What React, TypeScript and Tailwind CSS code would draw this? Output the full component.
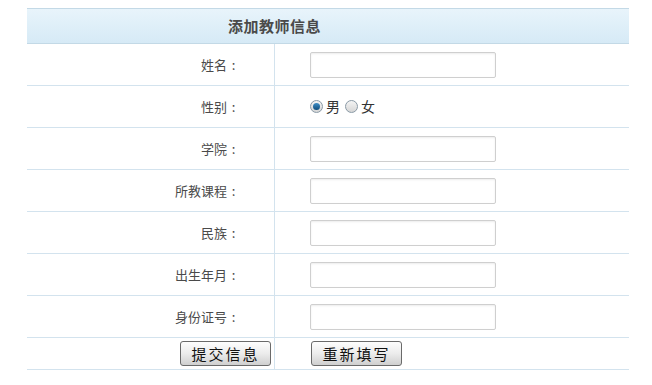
import React from "react";

const font = { fontFamily: '"Noto Sans CJK SC", "Noto Sans", sans-serif' };

function Row({ label, children }: { label: string; children: React.ReactNode }) {
  return (
    <div className="flex h-[42px] border-b border-[#d3e3ee]">
      <div className="w-[248px] shrink-0 border-r border-[#d3e3ee] flex items-center justify-end pr-[34px] text-[13px] text-[#4a4a4a]">
        <span>{label}</span>
        <span className="inline-block w-[13px] text-center">:</span>
      </div>
      <div className="flex-1 flex items-center pl-[35px]">{children}</div>
    </div>
  );
}

function Input() {
  return (
    <input
      type="text"
      className="w-[186px] h-[26px] border border-[#cfcfcf] rounded-[2px] bg-white shadow-[inset_0_1px_2px_rgba(0,0,0,0.08)] outline-none"
    />
  );
}

function Radio({ checked }: { checked?: boolean }) {
  return (
    <span className="inline-flex w-[13px] h-[13px] rounded-full border border-[#8a9aa6] bg-gradient-to-b from-[#f4f4f4] to-[#d6d6d6] items-center justify-center">
      {checked && <span className="w-[7px] h-[7px] rounded-full bg-gradient-to-b from-[#3f8fc7] to-[#0d4d7c]" />}
    </span>
  );
}

function Btn({ text }: { text: string }) {
  return (
    <button className="w-[91px] h-[25px] border border-[#6a6a6a] rounded-[3px] bg-gradient-to-b from-[#fdfdfd] via-[#ececec] to-[#cfcfcf] text-[15px] text-[#111] tracking-[2px] leading-none flex items-center justify-center">
      {text}
    </button>
  );
}

export default function App() {
  return (
    <div className="w-[652px] h-[385px] bg-white pt-[8px]" style={font}>
      <div className="ml-[27px] w-[602px]">
        <div className="h-[36px] border-t border-b border-[#c3d9e6] bg-gradient-to-b from-[#e8f4fb] to-[#d6eaf6] flex items-center pl-[201px] text-[15px] font-bold text-[#4a4a4a] tracking-[0.5px]">
          添加教师信息
        </div>
        <Row label="姓名"><Input /></Row>
        <Row label="性别">
          <div className="flex items-center text-[14px] text-[#333]">
            <Radio checked />
            <span className="ml-[3px]">男</span>
            <span className="ml-[5px] flex"><Radio /></span>
            <span className="ml-[3px]">女</span>
          </div>
        </Row>
        <Row label="学院"><Input /></Row>
        <Row label="所教课程"><Input /></Row>
        <Row label="民族"><Input /></Row>
        <Row label="出生年月"><Input /></Row>
        <Row label="身份证号"><Input /></Row>
        <div className="flex h-[32px] border-b border-[#d3e3ee]">
          <div className="w-[248px] shrink-0 border-r border-[#d3e3ee] flex items-center justify-end pr-[3px]">
            <Btn text="提交信息" />
          </div>
          <div className="flex-1 flex items-center pl-[36px]">
            <Btn text="重新填写" />
          </div>
        </div>
      </div>
    </div>
  );
}
